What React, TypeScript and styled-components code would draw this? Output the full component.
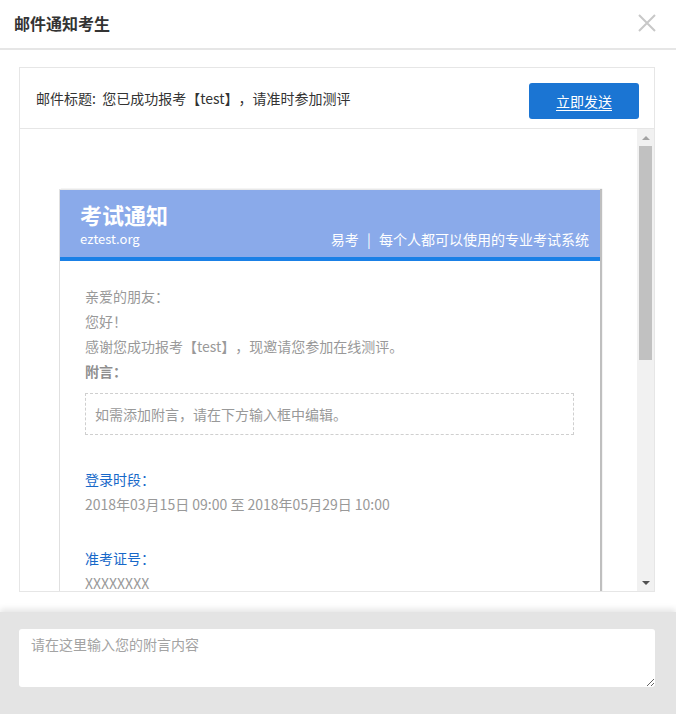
import React from "react";
import styled, { createGlobalStyle } from "styled-components";

const Global = createGlobalStyle`
  html, body {
    margin: 0;
    padding: 0;
    background: #fff;
  }
  body {
    width: 676px;
    height: 714px;
    overflow: hidden;
    font-family: "Microsoft YaHei", "Noto Sans CJK SC", "Liberation Sans", sans-serif;
    color: #333;
    text-spacing-trim: space-all;
  }
  * { box-sizing: border-box; }
`;

const Dialog = styled.div`
  width: 676px;
  height: 714px;
  display: flex;
  flex-direction: column;
  background: #fff;
`;

const Header = styled.div`
  height: 50px;
  flex: none;
  display: flex;
  align-items: center;
  justify-content: space-between;
  padding: 0 20px 2px 14px;
  border-bottom: 2px solid #e6e6e6;
`;

const Title = styled.h1`
  margin: 0;
  font-size: 16px;
  font-weight: bold;
  line-height: 22px;
  color: #333;
`;

const Close = styled.button`
  width: 18px;
  height: 18px;
  padding: 0;
  border: 0;
  background: none;
  display: flex;
  cursor: pointer;
`;

const Main = styled.div`
  flex: 1;
  min-height: 0;
  padding: 17px 21px 20px 19px;
  display: flex;
`;

const Card = styled.div`
  flex: 1;
  min-height: 0;
  border: 1px solid #e6e6e6;
  display: flex;
  flex-direction: column;
  overflow: hidden;
`;

const SubjectBar = styled.div`
  height: 61px;
  flex: none;
  display: flex;
  align-items: center;
  justify-content: space-between;
  padding: 0 15px 1px 16px;
  border-bottom: 1px solid #e6e6e6;
  font-size: 14px;
  color: #333;
`;

const SendButton = styled.button`
  width: 110px;
  height: 36px;
  margin-top: 6px;
  border: 0;
  border-radius: 3px;
  background: #1b75d3;
  color: #fff;
  font-family: inherit;
  font-size: 14px;
  text-decoration: underline;
  text-underline-offset: 3px;
  cursor: pointer;
`;

const ScrollFrame = styled.div`
  flex: 1;
  display: flex;
  min-height: 0;
`;

const Viewport = styled.div`
  flex: 1;
  overflow: hidden;
  padding-top: 60px;
`;

const Track = styled.div`
  width: 17px;
  flex: none;
  background: #f1f1f1;
  display: flex;
  flex-direction: column;
`;

const Arrow = styled.div<{ $down?: boolean; $dim?: boolean }>`
  height: 17px;
  flex: none;
  display: flex;
  align-items: center;
  justify-content: center;
  &::before {
    content: "";
    width: 0;
    height: 0;
    border-left: 4px solid transparent;
    border-right: 4px solid transparent;
    ${(p) =>
      p.$down
        ? `border-top: 4px solid ${p.$dim ? "#a3a3a3" : "#505050"};`
        : `border-bottom: 4px solid ${p.$dim ? "#a3a3a3" : "#505050"};`}
  }
`;

const Rail = styled.div`
  flex: 1;
  padding: 0 2px;
`;

const Thumb = styled.div`
  height: 214px;
  background: #c1c1c1;
`;

const Letter = styled.div`
  width: 541px;
  margin-left: 39px;
  border-left: 1px solid #e0e0e0;
  border-top: 1px solid #e8e8e8;
  box-shadow: 2px 0 1px rgba(0, 0, 0, 0.25);
  background: #fff;
`;

const LetterHead = styled.div`
  background: #8aaaea;
  border-bottom: 4px solid #1a80e6;
  padding: 9px 11px 8px 20px;
  color: #fff;
`;

const LetterTitle = styled.div`
  font-size: 22px;
  font-weight: bold;
  line-height: 30px;
`;

const LetterSub = styled.div`
  display: flex;
  justify-content: space-between;
  align-items: center;
  font-size: 13px;
  line-height: 20px;
`;

const Tagline = styled.span`
  font-size: 14px;
  word-spacing: 1px;
`;

const LetterBody = styled.div`
  padding: 23px 26px 0 25px;
  font-size: 14px;
  color: #999;
`;

const Line = styled.div<{ $strong?: boolean }>`
  line-height: 25px;
  font-weight: ${(p) => (p.$strong ? "bold" : "normal")};
  color: ${(p) => (p.$strong ? "#8f8f8f" : "#999")};
`;

const NoteBox = styled.div`
  margin-top: 9px;
  height: 42px;
  border: 1px dashed #cfcfcf;
  padding: 0 9px;
  display: flex;
  align-items: center;
  color: #999;
`;

const Section = styled.div<{ $gap: number }>`
  margin-top: ${(p) => p.$gap}px;
`;

const Label = styled.div`
  line-height: 25px;
  color: #1668c9;
`;

const Footer = styled.div`
  height: 102px;
  flex: none;
  background: #e4e4e4;
  box-shadow: 0 -3px 6px rgba(0, 0, 0, 0.1);
  padding: 17px 21px 0 19px;
  position: relative;
`;

const Remark = styled.textarea`
  display: block;
  width: 100%;
  height: 58px;
  border: 0;
  border-radius: 3px;
  background: #fff;
  padding: 5px 12px;
  font-family: inherit;
  font-size: 14px;
  line-height: 20px;
  color: #333;
  outline: none;
  &::placeholder {
    color: #a3a3a3;
  }
`;

export default function App() {
  return (
    <>
      <Global />
      <Dialog>
        <Header>
          <Title>邮件通知考生</Title>
          <Close aria-label="关闭">
            <svg width="18" height="18" viewBox="0 0 18 18">
              <path d="M1 1 L17 17 M17 1 L1 17" stroke="#c8c8c8" strokeWidth="2" fill="none" />
            </svg>
          </Close>
        </Header>
        <Main>
          <Card>
            <SubjectBar>
              <span>邮件标题:&nbsp;&nbsp;您已成功报考【test】，请准时参加测评</span>
              <SendButton>立即发送</SendButton>
            </SubjectBar>
            <ScrollFrame>
              <Viewport>
                <Letter>
                  <LetterHead>
                    <LetterTitle>考试通知</LetterTitle>
                    <LetterSub>
                      <span>eztest.org</span>
                      <Tagline>易考&nbsp;&nbsp;|&nbsp;&nbsp;每个人都可以使用的专业考试系统</Tagline>
                    </LetterSub>
                  </LetterHead>
                  <LetterBody>
                    <Line>亲爱的朋友：</Line>
                    <Line>您好！</Line>
                    <Line>感谢您成功报考【test】，现邀请您参加在线测评。</Line>
                    <Line $strong>附言：</Line>
                    <NoteBox>如需添加附言，请在下方输入框中编辑。</NoteBox>
                    <Section $gap={32}>
                      <Label>登录时段：</Label>
                      <Line>2018年03月15日 09:00 至 2018年05月29日 10:00</Line>
                    </Section>
                    <Section $gap={29}>
                      <Label>准考证号：</Label>
                      <Line>XXXXXXXX</Line>
                    </Section>
                  </LetterBody>
                </Letter>
              </Viewport>
              <Track>
                <Arrow $dim />
                <Rail>
                  <Thumb />
                </Rail>
                <Arrow $down />
              </Track>
            </ScrollFrame>
          </Card>
        </Main>
        <Footer>
          <Remark placeholder="请在这里输入您的附言内容" />
        </Footer>
      </Dialog>
    </>
  );
}
